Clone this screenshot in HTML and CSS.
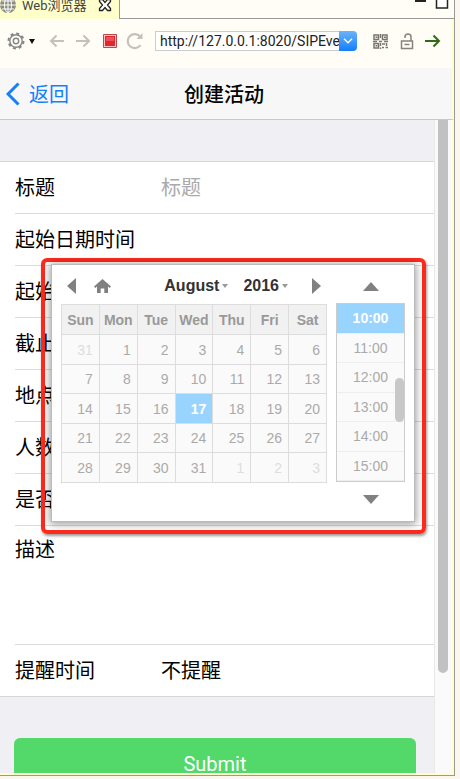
FILE: index.html
```
<!DOCTYPE html>
<html lang="zh">
<head>
  <meta charset="utf-8">
  <meta name="viewport" content="width=device-width, initial-scale=1">
  <title>创建活动</title>
  <link rel="stylesheet" href="styles.css">
</head>
<body>

<div class="window">

  <!-- tabs -->
  <div class="tabs">
    <div class="tab">
      <svg class="globe" width="16" height="16" viewBox="0 0 16 16" fill="none" stroke="#fff" stroke-width="1">
        <circle cx="8" cy="8" r="8" fill="#8b8b80" stroke="none"/>
        <ellipse cx="8" cy="8" rx="3.5" ry="7.5"/>
        <path d="M8 0v16M0 8h16M2 4h12M2 12h12"/>
      </svg>
      <span>Web浏览器</span>
      <svg width="14" height="14" viewBox="0 0 14 14" fill="#fff" stroke="#222" stroke-width="1.3">
        <path d="M1.5 1.500h3L7 4.500l2.500-3h3v2L9.500 7l3 3.500v2h-3L7 9.500l-2.500 3h-3v-2L4.500 7l-3-3.500z"/>
      </svg>
    </div>
    <div class="tabs-rest">
      <svg width="36" height="10" viewBox="0 0 36 10">
        <path d="M1 0h11v2H1z" fill="#222"/>
        <path d="M22.500-3h11V8h-11z" fill="#fff" stroke="#222" stroke-width="1.500"/>
      </svg>
    </div>
  </div>

  <!-- toolbar -->
  <div class="toolbar">
    <button class="tool" aria-label="settings">
      <svg width="28" height="18" viewBox="0 0 28 18" fill="none" stroke="#858585">
        <circle cx="9" cy="9" r="7.500" stroke-width="2" stroke-dasharray="3 2.890"/>
        <circle cx="9" cy="9" r="6.200" stroke-width="1.400"/>
        <circle cx="9" cy="9" r="2.700" stroke-width="1.400"/>
        <path d="M22 7h6l-3 5z" fill="#111" stroke="none"/>
      </svg>
    </button>
    <button class="tool back" aria-label="back">
      <svg width="16" height="14" viewBox="0 0 16 14" fill="none" stroke="#c3c1bb" stroke-width="2"><path d="M15 7H2M7.500 1.500L2 7l5.500 5.500"/></svg>
    </button>
    <button class="tool forward" aria-label="forward">
      <svg width="16" height="14" viewBox="0 0 16 14" fill="none" stroke="#c3c1bb" stroke-width="2"><path d="M1 7h13M8.500 1.500L14 7l-5.500 5.500"/></svg>
    </button>
    <button class="tool stop" aria-label="stop">
      <svg width="14" height="14" viewBox="0 0 14 14"><path d="M.5.5h13v13H.5z" fill="#fbc4c4" stroke="#bd4a4a"/><path d="M2 2h10v10H2z" fill="#e4242f"/><path d="M3 3h8v4H3z" fill="#ef5058"/></svg>
    </button>
    <button class="tool reload" aria-label="reload">
      <svg width="18" height="18" viewBox="0 0 18 18" fill="none" stroke="#c3c1bb" stroke-width="2.200"><path d="M14.500 13A7 7 0 1 1 14 4.500"/><path d="M16.500 1v6h-6z" fill="#c3c1bb" stroke="none"/></svg>
    </button>
    <div class="address">
      <input type="text" value="http://127.0.0.1:8020/SIPEvent" aria-label="address">
      <button aria-label="history">
        <svg width="10" height="6" viewBox="0 0 10 6" fill="none" stroke="#fff" stroke-width="1.500"><path d="M1 .7l4 4 4-4"/></svg>
      </button>
    </div>
    <button class="tool qr" aria-label="qr code">
      <svg width="15" height="15" viewBox="0 0 15 15" fill="none" stroke="#77756f" stroke-width="1.500">
        <path d="M1 1h4.500v4.500H1zM9.500 1H14v4.500H9.500zM1 9.500h4.500V14H1z"/>
        <path d="M2.500 3.200h2M11 3.200h2M2.500 11.700h2M7.500 0v4M0 7.500h4M6 7.500h3M11 7.500h4M7.500 9v3M9 10h3M13.500 9v3M9 13.500h2M12.500 13.500H15M7.500 13.500v1.500"/>
      </svg>
    </button>
    <button class="tool lock" aria-label="lock">
      <svg width="14" height="17" viewBox="0 0 14 17" fill="none" stroke="#85837d" stroke-width="1.500"><path d="M1.500 8h11v7.500h-11zM5 5V4a3 3 0 0 1 6 0v4M4.500 11.500h5"/></svg>
    </button>
    <button class="tool go" aria-label="go">
      <svg width="16" height="14" viewBox="0 0 16 14" fill="none" stroke="#2f6a17" stroke-width="2"><path d="M0 7h14M8.500 1.500L14 7l-5.500 5.500"/></svg>
    </button>
  </div>

  <!-- page header -->
  <header class="nav">
    <a href="#" class="nav-back">
      <svg width="14" height="24" viewBox="0 0 14 24" fill="none" stroke="#147efb" stroke-width="3"><path d="M12.500 1.500L2 12l10.500 10.500"/></svg>
      返回
    </a>
    <h1>创建活动</h1>
  </header>

  <div class="view">
    <form class="page">
      <div class="list">
        <div class="row"><label for="title">标题</label><input type="text" id="title" placeholder="标题"></div>
        <div class="row has-picker">
          <label for="start">起始日期时间</label><input type="text" id="start">

          <div class="marker">
            <div class="picker">
              <div class="calendar">
                <div class="picker-head">
                  <button type="button" aria-label="previous month"><svg width="9" height="16" viewBox="0 0 9 16" fill="#808080"><path d="M9 0v16L0 8z"/></svg></button>
                  <button type="button" class="home" aria-label="today"><svg width="17" height="14" viewBox="0 0 17 14" fill="#808080"><path d="M8.500 0L17 7.500l-1.300 1.400L14 7.500V14h-3.700V9.500H6.700V14H3V7.500L1.300 8.900 0 7.500z"/></svg></button>
                  <button type="button" class="month">August<i class="caret"></i></button>
                  <button type="button">2016<i class="caret"></i></button>
                  <button type="button" class="next" aria-label="next month"><svg width="9" height="16" viewBox="0 0 9 16" fill="#808080"><path d="M0 0v16l9-8z"/></svg></button>
                </div>
                <table>
                  <thead>
                    <tr><th>Sun</th><th>Mon</th><th>Tue</th><th>Wed</th><th>Thu</th><th>Fri</th><th>Sat</th></tr>
                  </thead>
                  <tbody>
                    <tr><td class="other">31</td><td>1</td><td>2</td><td>3</td><td>4</td><td>5</td><td>6</td></tr>
                    <tr><td>7</td><td>8</td><td>9</td><td>10</td><td>11</td><td>12</td><td>13</td></tr>
                    <tr><td>14</td><td>15</td><td>16</td><td class="current">17</td><td>18</td><td>19</td><td>20</td></tr>
                    <tr><td>21</td><td>22</td><td>23</td><td>24</td><td>25</td><td>26</td><td>27</td></tr>
                    <tr><td>28</td><td>29</td><td>30</td><td>31</td><td class="other">1</td><td class="other">2</td><td class="other">3</td></tr>
                  </tbody>
                </table>
              </div>
              <div class="times">
                <button type="button" class="times-arrow" aria-label="earlier"><svg width="16" height="9" viewBox="0 0 16 9" fill="#808080"><path d="M0 9h16L8 0z"/></svg></button>
                <div class="times-list">
                  <button type="button" class="current">10:00</button>
                  <button type="button">11:00</button>
                  <button type="button">12:00</button>
                  <button type="button">13:00</button>
                  <button type="button">14:00</button>
                  <button type="button">15:00</button>
                  <span class="times-thumb"></span>
                </div>
                <button type="button" class="times-arrow down" aria-label="later"><svg width="16" height="9" viewBox="0 0 16 9" fill="#808080"><path d="M0 0h16L8 9z"/></svg></button>
              </div>
            </div>
          </div>
        </div>
        <div class="row"><label for="begin">起始</label><input type="text" id="begin"></div>
        <div class="row"><label for="end">截止</label><input type="text" id="end"></div>
        <div class="row"><label for="place">地点</label><input type="text" id="place"></div>
        <div class="row"><label for="people">人数</label><input type="text" id="people"></div>
        <div class="row"><label for="flag">是否</label><input type="text" id="flag"></div>
        <div class="row tall"><label for="desc">描述</label><textarea id="desc"></textarea></div>
        <div class="row"><label for="remind">提醒时间</label><select id="remind"><option>不提醒</option></select></div>
      </div>
      <button type="submit" class="submit">Submit</button>
    </form>
    <div class="scrollbar"><div class="thumb"></div></div>
  </div>

</div>

</body>
</html>
```
FILE: styles.css
```
* {
  box-sizing: border-box;
}

body {
  margin: 0;
  height: 100vh;
  padding: 0 5px 3px 0;
  background-color: #fbf7ef;
  font-family: Roboto, "Noto Sans CJK SC", sans-serif;
  font-size: 20px;
  color: #000;
}

button, input, select, textarea {
  margin: 0;
  padding: 0;
  border: none;
  background: none;
  font: inherit;
  color: inherit;
  outline: none;
}

svg {
  display: block;
  flex: none;
}

.window {
  display: flex;
  flex-direction: column;
  height: 100%;
  border-right: 1px solid #999;
  border-bottom: 1px solid #999;
  overflow: hidden;
}

/* tabs */

.tabs {
  display: flex;
  flex: none;
  height: 19px;
}

.tab {
  display: flex;
  align-items: flex-start;
  width: 119px;
  background-color: #ffffcc;
  font-size: 13px;
  line-height: 12px;
  color: #444;
}

.tab span {
  width: 76px;
  padding-left: 6px;
}

.globe {
  margin-top: -3px;
}

.tab svg:last-child {
  margin-top: -2px;
  margin-left: 6px;
}

.tabs-rest {
  display: flex;
  flex: 1;
  justify-content: flex-end;
  padding-right: 4px;
  border-left: 1px solid #999;
  border-bottom: 1px solid #999;
  background-color: #fffdf5;
}

/* toolbar */

.toolbar {
  display: flex;
  align-items: center;
  flex: none;
  height: 49px;
  padding: 0 11px 5px 7px;
  border-right: 2px solid #ffffcc;
  background-color: #fffdf5;
}

.back {
  margin-left: 14px;
}

.forward {
  margin-left: 10px;
}

.stop {
  margin-left: 12px;
}

.reload {
  margin-left: 9px;
}

.address {
  display: flex;
  flex: 1;
  min-width: 0;
  height: 20px;
  margin-left: 11px;
}

.address input {
  flex: 1;
  min-width: 0;
  padding-left: 4px;
  border: 1px solid #ccc;
  border-right: none;
  background-color: #fff;
  font-size: 14px;
  color: #222;
}

.address button {
  display: flex;
  align-items: center;
  justify-content: center;
  width: 18px;
  border-radius: 0 4px 4px 0;
  background: linear-gradient(#6cb3fa, #147efb);
}

.qr {
  margin-left: 16px;
}

.lock {
  margin-left: 12px;
}

.go {
  margin-left: 11px;
}

/* page header */

.nav {
  display: grid;
  grid-template-columns: 1fr auto 1fr;
  align-items: center;
  flex: none;
  height: 52px;
  padding: 0 10px 0 6px;
  border-right: 2px solid #ffffcc;
  border-bottom: 1px solid #c8c8cc;
  background-color: #f7f7f7;
}

.nav-back {
  display: flex;
  align-items: center;
  gap: 9px;
  color: #147efb;
  text-decoration: none;
}

.nav h1 {
  margin: 0;
  font-size: 20px;
  font-weight: 500;
}

/* content */

.view {
  display: flex;
  flex: 1;
  min-height: 0;
  border-right: 2px solid #ffffcc;
  border-bottom: 2px solid #ffffcc;
  overflow: hidden;
}

.page {
  flex: 1;
  padding-top: 41px;
  background-color: #efeff4;
}

.list {
  border-top: 1px solid #d5d5da;
  border-bottom: 1px solid #d5d5da;
  background-color: #fff;
}

.row {
  display: flex;
  height: 52px;
  margin-left: 15px;
  border-bottom: 1px solid #dcdcdc;
  line-height: 53px;
}

.row:last-child {
  height: 51px;
  border-bottom: none;
}

.row label {
  flex: none;
  width: 146px;
}

.row input, .row textarea, .row select {
  flex: 1;
  min-width: 0;
  resize: none;
  appearance: none;
}

.row input {
  padding-top: 2px;
}

.row input::placeholder {
  color: #aaa;
}

.tall {
  height: 119px;
  line-height: 48px;
}

.submit {
  display: block;
  width: calc(100% - 32px);
  height: 52px;
  margin: 41px 18px 0 14px;
  border-radius: 6px;
  background-color: #53d86a;
  color: #fff;
}

.scrollbar {
  width: 18px;
  padding-left: 3px;
  border-left: 1px solid #e8e8e8;
  background-color: #fafafa;
}

.thumb {
  width: 10px;
  height: 553px;
  border-radius: 0 0 5px 5px;
  background-color: #c1c1c1;
}

/* date picker, floats over the rows below its field */

.has-picker {
  position: relative;
}

.marker {
  position: absolute;
  z-index: 1;
  top: 44px;
  left: 26px;
  right: 8px;
  padding: 2px 7px 8px 6px;
  border: 4px solid #ff2a1c;
  border-radius: 6px;
  box-shadow: 1px 2px 3px rgba(0, 0, 0, 0.4);
  line-height: 18px;
}

.picker {
  display: flex;
  gap: 9px;
  height: 258px;
  padding: 0 9px;
  border: 1px solid #bbb;
  background-color: #fff;
  box-shadow: 0 1px 8px 1px rgba(0, 0, 0, 0.4);
  font-family: "Liberation Sans", sans-serif;
  font-size: 14px;
}

.calendar {
  flex: 1;
}

.picker-head {
  display: flex;
  align-items: center;
  height: 39px;
  padding: 2px 6px 0;
  font-size: 16px;
  font-weight: bold;
  color: #333;
}

.picker-head button {
  display: flex;
  align-items: center;
}

.picker-head .home {
  margin-left: 18px;
}

.picker-head .month {
  margin: 0 15px 0 auto;
}

.picker-head .next {
  margin-left: 24px;
}

.caret {
  margin-left: 3px;
  border: 3px solid transparent;
  border-top: 4px solid #999;
  border-bottom: none;
}

table {
  width: 100%;
  border-collapse: collapse;
  table-layout: fixed;
}

th, td {
  height: 30px;
  padding: 0;
  border: 1px solid #ddd;
}

th {
  background-color: #f1f1f1;
  color: #999;
}

td {
  padding-right: 6px;
  background-color: #fafafa;
  color: #aaa;
  text-align: right;
}

tr:nth-child(even) td {
  height: 29px;
}

.other {
  color: #ddd;
}

td.current, .times-list .current {
  background-color: #99d4ff;
  color: #fff;
  font-weight: bold;
}

.times {
  width: 69px;
}

.times-arrow {
  display: flex;
  align-items: center;
  justify-content: center;
  width: 100%;
  height: 38px;
  padding-top: 4px;
}

.times-list {
  display: flex;
  flex-direction: column;
  position: relative;
  height: 179px;
  border: 1px solid #ccc;
}

.times-list button {
  flex: 1;
  border-bottom: 1px solid #eee;
  background-color: #fafafa;
  color: #aaa;
}

.times-thumb {
  position: absolute;
  top: 74px;
  right: 0;
  width: 9px;
  height: 44px;
  border-radius: 5px;
  background-color: #c8c8c8;
}

.down {
  height: 30px;
}
```
